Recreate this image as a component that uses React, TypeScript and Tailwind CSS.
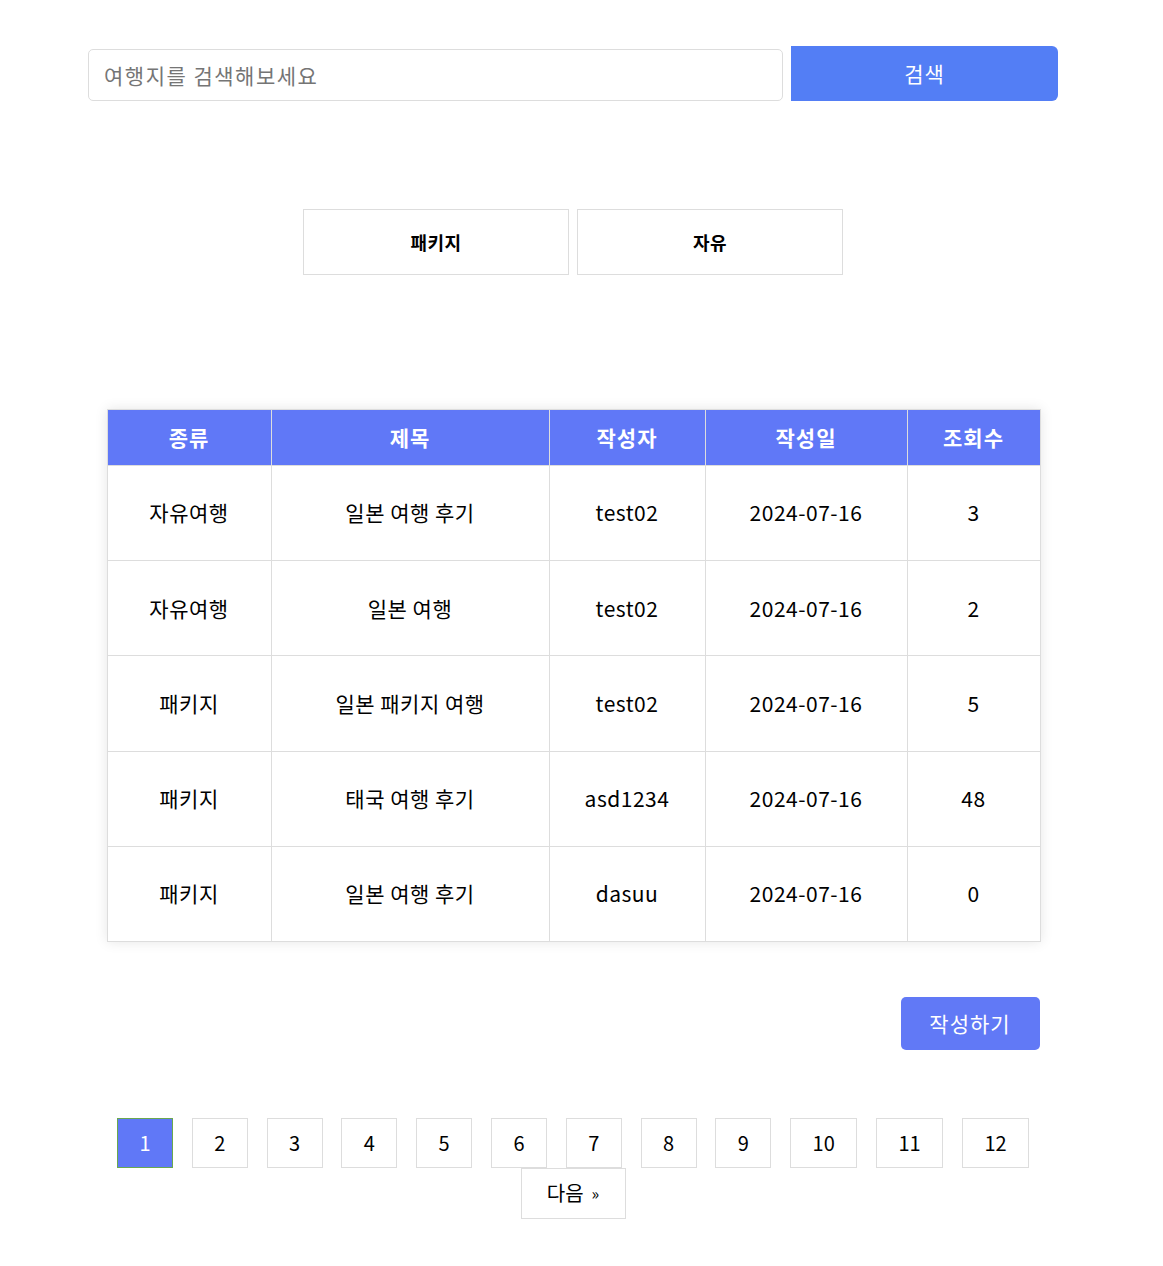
import { clsx } from 'clsx'

const rows = [
  { kind: '자유여행', title: '일본 여행 후기', author: 'test02', date: '2024-07-16', views: 3 },
  { kind: '자유여행', title: '일본 여행', author: 'test02', date: '2024-07-16', views: 2 },
  { kind: '패키지', title: '일본 패키지 여행', author: 'test02', date: '2024-07-16', views: 5 },
  { kind: '패키지', title: '태국 여행 후기', author: 'asd1234', date: '2024-07-16', views: 48 },
  { kind: '패키지', title: '일본 여행 후기', author: 'dasuu', date: '2024-07-16', views: 0 },
]

const pages = [1, 2, 3, 4, 5, 6, 7, 8, 9, 10, 11, 12]

export default function App() {
  return (
    <div
      className="min-h-screen bg-white text-black"
      style={{ fontFamily: '"Noto Sans CJK KR", "Noto Sans", sans-serif' }}
    >
      <div className="ml-[88px] w-[970px] pt-[46px] pb-[46px]">
        {/* Search */}
        <div className="flex items-end gap-2">
          <input
            type="text"
            placeholder="여행지를 검색해보세요"
            className="h-[52px] w-[695px] rounded-[5px] border border-[#dddddd] px-[15px] text-[21px] tracking-[1.5px] outline-none placeholder:text-[#757575]"
          />
          <button className="h-[55px] flex-1 rounded-r-[6px] bg-[#537ef5] text-[21px] tracking-[1px] text-white">
            검색
          </button>
        </div>

        {/* Category */}
        <div className="mt-[108px] flex justify-center gap-2">
          <button className="h-[66px] w-[266px] border border-[#dddddd] bg-white text-[18px] font-bold tracking-[0.5px]">
            패키지
          </button>
          <button className="h-[66px] w-[266px] border border-[#dddddd] bg-white text-[18px] font-bold tracking-[0.5px]">
            자유
          </button>
        </div>

        {/* Board */}
        <div className="mx-auto mt-[134px] w-[933px]">
          <table className="w-full table-fixed border-collapse border border-[#dddddd] text-center shadow-[0_0_12px_rgba(0,0,0,0.1)]">
            <colgroup>
              <col className="w-[164px]" />
              <col className="w-[278px]" />
              <col className="w-[156px]" />
              <col className="w-[202px]" />
              <col className="w-[133px]" />
            </colgroup>
            <thead>
              <tr className="h-[56px] bg-[#6078f7] text-[21px] font-bold tracking-[1px] text-white">
                <th className="border border-[#dddddd]">종류</th>
                <th className="border border-[#dddddd]">제목</th>
                <th className="border border-[#dddddd]">작성자</th>
                <th className="border border-[#dddddd]">작성일</th>
                <th className="border border-[#dddddd]">조회수</th>
              </tr>
            </thead>
            <tbody>
              {rows.map((r, i) => (
                <tr key={i} className="h-[95.2px] text-[21px] tracking-[0.5px]">
                  <td className="border border-[#dddddd]">{r.kind}</td>
                  <td className="border border-[#dddddd]">{r.title}</td>
                  <td className="border border-[#dddddd]">{r.author}</td>
                  <td className="border border-[#dddddd]">{r.date}</td>
                  <td className="border border-[#dddddd]">{r.views}</td>
                </tr>
              ))}
            </tbody>
          </table>

          <div className="mt-[55px] flex justify-end">
            <button className="h-[53px] w-[139px] rounded-[5px] bg-[#6179f6] text-[21px] tracking-[1px] text-white">
              작성하기
            </button>
          </div>

          {/* Pagination */}
          <div className="mt-[68px] flex flex-wrap justify-center gap-x-[18.7px]">
            {pages.map((p) => (
              <button
                key={p}
                className={clsx(
                  'flex h-[50px] items-center justify-center border px-[21.5px] text-[20px]',
                  p === 1
                    ? 'border-[#6aa84f] bg-[#6078f7] text-white'
                    : 'border-[#dddddd] bg-white text-black',
                )}
              >
                {p}
              </button>
            ))}
            <button className="flex h-[51px] w-[105px] items-center justify-center gap-2 border border-[#dddddd] bg-white text-[20px]">
              다음 <span className="text-[16px]">»</span>
            </button>
          </div>
        </div>
      </div>
    </div>
  )
}
